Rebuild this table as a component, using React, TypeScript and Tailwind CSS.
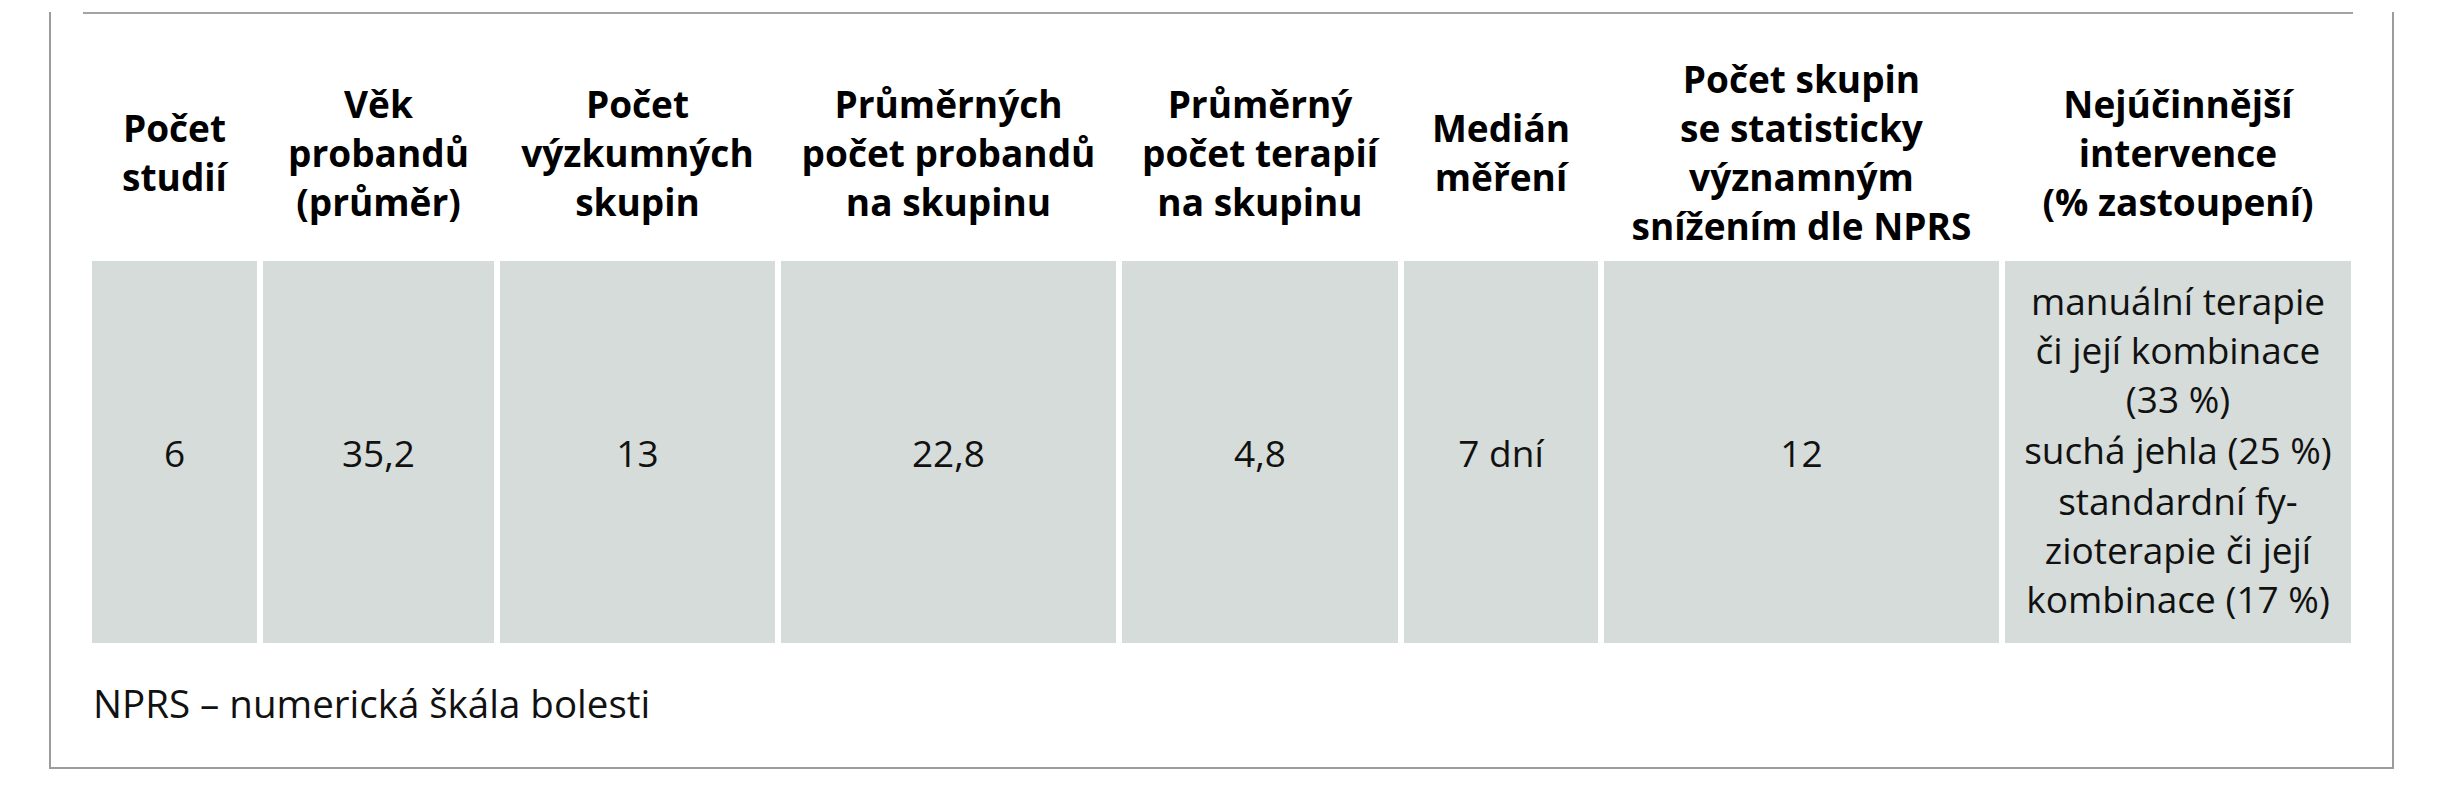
const headers: string[][] = [
  ["Počet", "studií"],
  ["Věk", "probandů", "(průměr)"],
  ["Počet", "výzkumných", "skupin"],
  ["Průměrných", "počet probandů", "na skupinu"],
  ["Průměrný", "počet terapií", "na skupinu"],
  ["Medián", "měření"],
  ["Počet skupin", "se statisticky", "významným", "snížením dle NPRS"],
  ["Nejúčinnější", "intervence", "(% zastoupení)"],
];

const values = ["6", "35,2", "13", "22,8", "4,8", "7 dní", "12"];

const interventions: string[][] = [
  ["manuální terapie", "či její kombinace", "(33 %)"],
  ["suchá jehla (25 %)"],
  ["standardní fy-", "zioterapie či její", "kombinace (17 %)"],
];

const App = () => {
  return (
    <div className="min-h-[800px] w-full bg-white font-['Open_Sans',sans-serif] text-[37px] leading-[49px] text-[#111]">
      <div className="ml-[49px] w-[2345px] border-x-2 border-b-2 border-[#9c9c9c] pb-[39px]">
        <div className="mt-[12px] ml-[32px] h-[2px] w-[2270px] bg-[#a3a3a3]" />

        <div className="mt-[40px] ml-[41px] grid grid-cols-[165px_231px_275px_335px_276px_194px_395px_346px] grid-rows-[196px_382px] gap-x-[6px] gap-y-[11px]">
          {headers.map((lines, i) => (
            <div
              key={i}
              className="flex flex-col items-center justify-center text-center font-bold text-black"
            >
              {lines.map((line) => (
                <span key={line} className="whitespace-nowrap">
                  {line}
                </span>
              ))}
            </div>
          ))}

          {values.map((value, i) => (
            <div
              key={i}
              className="flex items-center justify-center bg-[#d5dcd9] text-center"
            >
              <span className="whitespace-nowrap">{value}</span>
            </div>
          ))}

          <div className="flex flex-col items-center justify-center gap-[2px] bg-[#d5dcd9] pb-[6px] text-center">
            {interventions.map((item, i) => (
              <div key={i} className="flex flex-col items-center">
                {item.map((line) => (
                  <span key={line} className="whitespace-nowrap">
                    {line}
                  </span>
                ))}
              </div>
            ))}
          </div>
        </div>

        <p className="mt-[36px] ml-[42px] whitespace-nowrap text-[38.5px]">
          NPRS – numerická škála bolesti
        </p>
      </div>
    </div>
  );
};

export default App;
